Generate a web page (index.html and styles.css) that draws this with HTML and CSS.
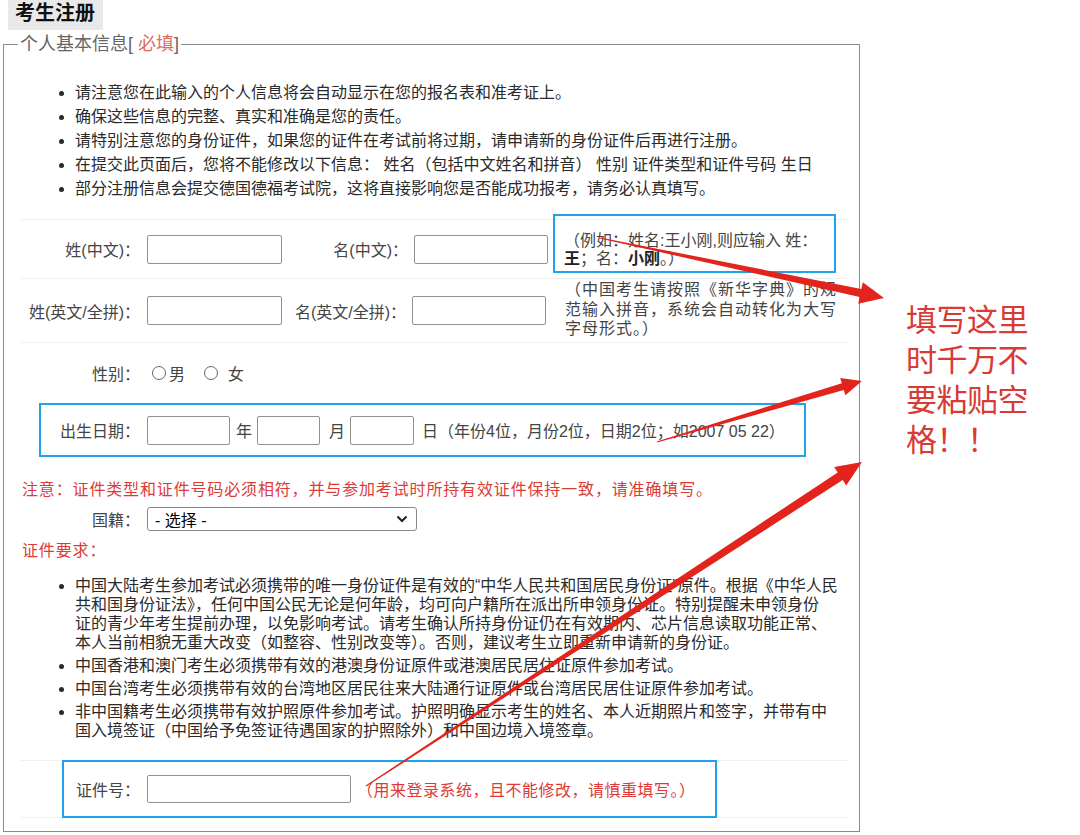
FILE: index.html
```html
<!DOCTYPE html>
<html lang="zh-CN">
<head>
<meta charset="utf-8">
<title>考生注册</title>
<link rel="stylesheet" href="styles.css">
</head>
<body>
<div class="page">
  <div class="title-wrap"><div class="title">考生注册</div></div>
  <fieldset class="box">
    <legend>个人基本信息[ <span class="req">必填</span>]</legend>
    <ul class="notes">
      <li>请注意您在此输入的个人信息将会自动显示在您的报名表和准考证上。</li>
      <li>确保这些信息的完整、真实和准确是您的责任。</li>
      <li>请特别注意您的身份证件，如果您的证件在考试前将过期，请申请新的身份证件后再进行注册。</li>
      <li>在提交此页面后，您将不能修改以下信息： 姓名（包括中文姓名和拼音） 性别 证件类型和证件号码 生日</li>
      <li>部分注册信息会提交德国德福考试院，这将直接影响您是否能成功报考，请务必认真填写。</li>
    </ul>

    <div class="row r1">
      <label class="lab">姓(中文)：</label><input class="inp w135" type="text">
      <label class="lab2">名(中文)：</label><input class="inp w134 ml6" type="text">
      <div class="hint hint-box">（例如：姓名:王小刚,则应输入 姓：<br><b>王</b>；名：<b>小刚</b>。）</div>
    </div>

    <div class="row r2">
      <label class="lab">姓(英文/全拼)：</label><input class="inp w135" type="text">
      <label class="lab2 narrow">名(英文/全拼)：</label><input class="inp w134 ml6" type="text">
      <div class="hint hint-plain">（中国考生请按照《新华字典》的规<br>范输入拼音，系统会自动转化为大写<br>字母形式。）</div>
    </div>

    <div class="row r3">
      <label class="lab">性别：</label>
      <input class="radio first" type="radio" name="sex"><span class="rtxt">男</span>
      <input class="radio second" type="radio" name="sex"><span class="rtxt wide">女</span>
    </div>

    <div class="birth">
      <label class="lab-b">出生日期：</label>
      <input class="inp by" type="text"><span class="unit u1">年</span>
      <input class="inp bm" type="text"><span class="unit u2">月</span>
      <input class="inp bd" type="text"><span class="unit u3">日（年份4位，月份2位，日期2位；如2007 05 22）</span>
    </div>

    <p class="warn">注意：证件类型和证件号码必须相符，并与参加考试时所持有效证件保持一致，请准确填写。</p>

    <div class="nat">
      <label class="lab-n">国籍：</label>
      <div class="select"><span>- 选择 -</span>
        <svg width="12" height="8" viewBox="0 0 12 8"><path d="M1.5 1.5 L6 6 L10.5 1.5" fill="none" stroke="#222" stroke-width="2"/></svg>
      </div>
    </div>

    <p class="warn req-title">证件要求：</p>

    <ul class="reqs">
      <li>中国大陆考生参加考试必须携带的唯一身份证件是有效的“中华人民共和国居民身份证”原件。根据《中华人民<br>共和国身份证法》，任何中国公民无论是何年龄，均可向户籍所在派出所申领身份证。特别提醒未申领身份<br>证的青少年考生提前办理，以免影响考试。请考生确认所持身份证仍在有效期内、芯片信息读取功能正常、<br>本人当前相貌无重大改变（如整容、性别改变等）。否则，建议考生立即重新申请新的身份证。</li>
      <li>中国香港和澳门考生必须携带有效的港澳身份证原件或港澳居民居住证原件参加考试。</li>
      <li>中国台湾考生必须携带有效的台湾地区居民往来大陆通行证原件或台湾居民居住证原件参加考试。</li>
      <li>非中国籍考生必须携带有效护照原件参加考试。护照明确显示考生的姓名、本人近期照片和签字，并带有中<br>国入境签证（中国给予免签证待遇国家的护照除外）和中国边境入境签章。</li>
    </ul>

    <div class="idrow">
      <div class="idbox">
        <label class="lab-i">证件号：</label><input class="inp wid" type="text">
        <span class="idhint">（用来登录系统，且不能修改，请慎重填写。）</span>
      </div>
    </div>
  </fieldset>

  <div class="callout">填写这里<br>时千万不<br>要粘贴空<br>格！！</div>

  <svg class="arrows" width="1080" height="835" viewBox="0 0 1080 835">
    <polygon points="600.1,237.4 861.3,289.1 862.8,282.2 884,298 858.2,303.8 859.7,296.9 599.9,238.6"/>
    <polygon points="656.8,441.4 841.8,383.3 840.2,378.1 862,381 845.4,395.3 843.8,390.1 657.2,442.6"/>
    <polygon points="365.7,785.5 837.7,472.4 834.2,467.0 862,462 846.2,485.4 842.7,480.0 366.3,786.5"/>
  </svg>
</div>
</body>
</html>
```

FILE: styles.css
```css
html, body {
  margin: 0;
  padding: 0;
  background: #ffffff;
}

body {
  font-family: "Liberation Sans", "Noto Sans CJK SC", sans-serif;
  font-size: 16px;
  color: #2a2a2a;
}

.page {
  position: relative;
  width: 1080px;
  height: 835px;
  overflow: hidden;
}

.title-wrap {
  height: 30px;
}

.title {
  display: inline-block;
  margin-left: 8px;
  padding: 0 8px 0 7px;
  height: 30px;
  line-height: 27px;
  background: #e9e9e9;
  font-size: 20px;
  font-weight: bold;
  color: #111111;
}

.box {
  margin: 4px 0 0 3px;
  padding: 0 0 13px 0;
  width: 857px;
  box-sizing: border-box;
  border: 1px solid #8c8c8c;
  min-width: 0;
}

.box legend {
  margin-left: 14px;
  padding: 0 2px;
  font-size: 18px;
  line-height: 20px;
  color: #666666;
}

.req {
  color: #e06a5f;
}

.notes {
  margin: 27px 0 18px 0;
  padding-left: 71px;
  line-height: 24px;
}

.row {
  display: flex;
  align-items: center;
  margin: 0 10px 0 16px;
  border-top: 1px solid #f1f1f1;
  box-sizing: border-box;
}

.r1 { height: 59px; }
.r2 { height: 64px; }
.r3 { height: 61px; }

.lab,
.lab2,
.lab-b,
.lab-n,
.lab-i {
  text-align: right;
  font-size: 16px;
  color: #444;
  white-space: nowrap;
}

.lab { width: 120px; }
.lab2 { width: 126px; }
.lab2.narrow { width: 124px; }
.lab-b { width: 99px; }
.lab-n { width: 136px; }
.lab-i { width: 76px; }

.inp {
  margin: 0 0 0 7px;
  padding: 0;
  height: 29px;
  box-sizing: border-box;
  border: 1px solid #909090;
  border-radius: 2px;
  background: #fff;
}

.w135 { width: 135px; }
.w134 { width: 134px; }
.ml6 { margin-left: 6px; }

.hint {
  white-space: nowrap;
  color: #444;
}

.hint-box {
  margin: -12px 0 0 5px;
  width: 283px;
  height: 59px;
  box-sizing: border-box;
  border: 2px solid #1fa3ea;
  padding: 16px 0 0 9px;
  line-height: 18px;
}

.hint-box b {
  font-weight: bold;
  color: #222;
}

.hint-plain {
  margin: -2px 0 0 19px;
  line-height: 19.5px;
  letter-spacing: 1px;
}

.radio {
  -webkit-appearance: none;
  appearance: none;
  width: 14px;
  height: 14px;
  margin: 0;
  border: 1px solid #666;
  border-radius: 50%;
  box-sizing: border-box;
  background: #fff;
}

.radio.first { margin-left: 12px; }
.radio.second { margin-left: 19px; }

.rtxt {
  margin-left: 3px;
  color: #444;
}

.rtxt.wide { margin-left: 10px; }

.birth {
  display: flex;
  align-items: center;
  margin-left: 35px;
  width: 767px;
  height: 54px;
  box-sizing: border-box;
  border: 2px solid #1fa3ea;
}

.by { width: 83px; }
.bm { width: 63px; margin-left: 5px; }
.bd { width: 64px; margin-left: 5px; }

.unit {
  color: #444;
  white-space: nowrap;
}

.u1 { margin-left: 6px; }
.u2 { margin-left: 9px; }
.u3 { margin-left: 8px; }

.warn {
  margin: 23px 0 0 0;
  padding-left: 18px;
  line-height: 20px;
  color: #dd3b36;
  letter-spacing: 0.85px;
  white-space: nowrap;
}

.nat {
  display: flex;
  align-items: center;
  margin-top: 7px;
  height: 24px;
}

.select {
  display: flex;
  align-items: center;
  justify-content: space-between;
  margin-left: 7px;
  width: 270px;
  height: 24px;
  box-sizing: border-box;
  border: 1px solid #8a8a8a;
  border-radius: 3px;
  padding: 0 8px 0 7px;
  color: #000;
}

.req-title {
  margin-top: 10px;
}

.reqs {
  margin: 15px 0 20px 0;
  padding-left: 71px;
  line-height: 19px;
  white-space: nowrap;
}

.reqs li {
  margin-bottom: 4px;
}

.reqs li:last-child {
  margin-bottom: 0;
}

.idrow {
  margin: 0 10px 0 16px;
  border-top: 1px solid #f1f1f1;
  border-bottom: 1px solid #f1f1f1;
}

.idbox {
  display: flex;
  align-items: center;
  margin: -1px 0 -1px 42px;
  width: 655px;
  height: 58px;
  box-sizing: border-box;
  border: 2px solid #1fa3ea;
}

.wid {
  width: 204px;
  height: 28px;
}

.idhint {
  margin-left: 6px;
  color: #dd3b36;
  letter-spacing: 0.5px;
  white-space: nowrap;
}

.callout {
  position: absolute;
  left: 906px;
  top: 301px;
  font-family: "Liberation Sans", "Noto Sans CJK SC", sans-serif;
  font-size: 31px;
  line-height: 40px;
  color: #d93a33;
  letter-spacing: -0.5px;
}

.arrows {
  position: absolute;
  left: 0;
  top: 0;
  pointer-events: none;
}

.arrows polygon {
  fill: #e3241d;
}
```
